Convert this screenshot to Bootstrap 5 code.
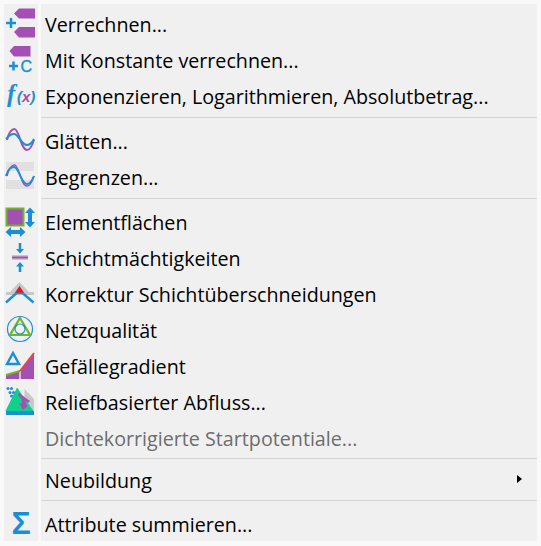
<!DOCTYPE html>
<html lang="de">
<head>
    <meta charset="UTF-8">
    <meta name="viewport" content="width=device-width, initial-scale=1.0">
    <title>Kontextmenü</title>
    <link rel="stylesheet" href="https://cdn.jsdelivr.net/npm/bootstrap@5.3.0/dist/css/bootstrap.min.css">
    <style>
        html, body { background: #f9f9f9; }
        body { font-family: "Open Sans", "Noto Sans", sans-serif; font-size: 19.7px; color: #000; height: 546px; overflow: hidden; }
        .menu-panel { margin: 4px 4px 0 4px; padding-top: 3px; background: linear-gradient(#f0f0f0, #f0f0f0) no-repeat 0 0 / 34px 100%, linear-gradient(#f0f0f0, #f0f0f0) no-repeat 37px 0 / calc(100% - 37px) 100%; height: 537px; }
        .menu-row { height: 36px; }
        .menu-row.short { height: 30px; }
        .menu-ico { width: 34px; height: 36px; flex: none; }
        .menu-label { margin-left: 7px; white-space: nowrap; line-height: 36px; }
        .short .menu-label { line-height: 30px; margin-left: 41px; }
        .off { color: #6d6d6d; }
        .menu-sep { height: 9px; margin-left: 37px; padding-top: 2px; }
        .menu-sep.up { padding-top: 1px; }
        .menu-sep.down { padding-top: 4px; }
        .menu-sep div { height: 1px; background: #d4d4d4; }
        .sub-arrow { width: 0; height: 0; border-left: 5px solid #000; border-top: 4.5px solid transparent; border-bottom: 4.5px solid transparent; margin-right: 15px; margin-bottom: 5px; }
        .sigma-ico { color: #1b8fd6; font-family: "Liberation Sans", sans-serif; font-size: 32px; font-weight: 700; line-height: 36px; }
        .last-row .menu-label { padding-top: 3px; }
    </style>
</head>
<body>
    <div class="menu-panel">
        <div class="menu-row d-flex align-items-center">
            <svg class="menu-ico" viewBox="0 0 34 36"><path d="M10 6.500 15 1.500h16v10H15zM10 25 15 20h16v10.500H15z" fill="#a44fb4"/><path d="M7 11v10M2 16h10" stroke="#1b8fd6" stroke-width="2.500" fill="none"/></svg>
            <span class="menu-label">Verrechnen...</span>
        </div>
        <div class="menu-row d-flex align-items-center">
            <svg class="menu-ico" viewBox="0 0 34 36"><path d="M5.500 8 10 3h16.500v10.500H10z" fill="#a44fb4"/><path d="M5 23h9M9.500 18.500v9" stroke="#1b8fd6" stroke-width="2.500" fill="none"/><text x="16.500" y="29" font-family="Liberation Sans" font-size="16" fill="#1b8fd6" stroke="#1b8fd6" stroke-width=".4">C</text></svg>
            <span class="menu-label">Mit Konstante verrechnen...</span>
        </div>
        <div class="menu-row d-flex align-items-center">
            <svg class="menu-ico" viewBox="0 0 34 36"><text x="3" y="23" font-family="Liberation Serif" font-size="25" font-style="italic" font-weight="700" fill="#1b8fd6">f</text><text x="13" y="23" font-family="Liberation Sans" font-size="15" font-style="italic" font-weight="700" fill="#1b8fd6">(<tspan fill="#a44fb4">x</tspan>)</text></svg>
            <span class="menu-label">Exponenzieren, Logarithmieren, Absolutbetrag...</span>
        </div>
        <div class="menu-sep"><div></div></div>
        <div class="menu-row d-flex align-items-center">
            <svg class="menu-ico" viewBox="0 0 34 36"><path d="M3 16C5 8 8 5 10.500 5 15 5 17 26 23 26 26 26 28 22 30 16" stroke="#a44fb4" stroke-width="2" fill="none"/><path d="M2 15C5 11 7 10 10 10 15 10 17 21 23 21 26 21 28 19 30 15" stroke="#1b8fd6" stroke-width="2" fill="none"/></svg>
            <span class="menu-label">Glätten...</span>
        </div>
        <div class="menu-row d-flex align-items-center">
            <svg class="menu-ico" viewBox="0 0 34 36"><path d="M2 2h28v9H2zM2 20h28v9H2z" fill="#e0e0e0"/><path d="M3 16C5 8 8 5 10.500 5 15 5 17 26 23 26 26 26 28 22 30 16" stroke="#a44fb4" stroke-width="1.500" fill="none"/><path d="M2 16C4 9 7 7 10 7 15 7 17 24 23 24 26 24 28 21 30 16" stroke="#1b8fd6" stroke-width="2" fill="none"/></svg>
            <span class="menu-label">Begrenzen...</span>
        </div>
        <div class="menu-sep"><div></div></div>
        <div class="menu-row d-flex align-items-center">
            <svg class="menu-ico" viewBox="0 0 34 36"><rect x="2.500" y="3.500" width="17" height="17" fill="#a44fb4" stroke="#6eb52a" stroke-width="2"/><path d="M26 2.500 21 8h3v9h-3L26 22.500 31 17h-3V8h3zM1.500 27 7 22v3h9v-3L21.500 27 16 32v-3H7v3z" fill="#1b8fd6"/></svg>
            <span class="menu-label">Elementflächen</span>
        </div>
        <div class="menu-row d-flex align-items-center">
            <svg class="menu-ico" viewBox="0 0 34 36"><path d="M8 14h16v5H8z" fill="#c8c8c8"/><path d="M8 15.500h16v2H8z" fill="#a44fb4"/><path d="M16 2v6" stroke="#1b8fd6" stroke-width="2.500"/><path d="M12 8h8l-4 4.500zM12 25.500h8L16 21z" fill="#1b8fd6"/><path d="M16 25v6" stroke="#1b8fd6" stroke-width="2.500"/></svg>
            <span class="menu-label">Schichtmächtigkeiten</span>
        </div>
        <div class="menu-row d-flex align-items-center">
            <svg class="menu-ico" viewBox="0 0 34 36"><path d="M15.500 5 26 16H5z" fill="#c8c8c8"/><path d="M2 15h28v3H2z" fill="#c8c8c8"/><path d="M2 25.500 12.500 16h6L29.500 25.500" stroke="#1b8fd6" stroke-width="2.400" fill="none"/><path d="M15.500 9 20 15.500H11z" fill="#e8141c"/></svg>
            <span class="menu-label">Korrektur Schichtüberschneidungen</span>
        </div>
        <div class="menu-row d-flex align-items-center">
            <svg class="menu-ico" viewBox="0 0 34 36"><circle cx="16" cy="16" r="12.500" stroke="#1b8fd6" stroke-width="1.200" fill="none"/><path d="M16 5 26 22H6z" stroke="#6eb52a" stroke-width="2.200" fill="none"/><circle cx="16" cy="16" r="5" stroke="#1b8fd6" stroke-width="1.200" fill="none"/></svg>
            <span class="menu-label">Netzqualität</span>
        </div>
        <div class="menu-row d-flex align-items-center">
            <svg class="menu-ico" viewBox="0 0 34 36"><path d="M2 26 16 22 30 4V30H2z" fill="#a44fb4"/><path d="M15 22v8h2v-8z" fill="#c8c8c8"/><path d="M2 26 16 22" stroke="#6eb52a" stroke-width="2" fill="none"/><path d="M16 22 30 4" stroke="#f0453c" stroke-width="2" fill="none"/><path d="M9 4 15 15H3z" stroke="#1b8fd6" stroke-width="2.400" fill="none"/></svg>
            <span class="menu-label">Gefällegradient</span>
        </div>
        <div class="menu-row d-flex align-items-center">
            <svg class="menu-ico" viewBox="0 0 34 36"><path d="M20.500 4 30 14V26H20.500z" fill="#c8c8c8"/><path d="M13 2.500 29.500 26H1.500z" fill="#0fd18c"/><path d="M2 26h28v4H2z" fill="#1b8fd6"/><path d="M15 8 26 16 24 18 21 15.500 23 21 25 20 19 25 15 18 18 19 17.500 14 14 10z" fill="#a44fb4"/><g fill="#1b8fd6"><circle cx="4" cy="3.500" r="1.500"/><circle cx="7.500" cy="3.500" r="1.500"/><circle cx="6" cy="7.500" r="1.500"/><circle cx="9.500" cy="7.500" r="1.500"/><circle cx="7.500" cy="11" r="1.500"/></g></svg>
            <span class="menu-label">Reliefbasierter Abfluss...</span>
        </div>
        <div class="menu-row d-flex align-items-center">
            <span class="menu-ico"></span>
            <span class="menu-label off">Dichtekorrigierte Startpotentiale...</span>
        </div>
        <div class="menu-sep up"><div></div></div>
        <div class="menu-row short d-flex align-items-center">
            <span class="menu-label flex-grow-1">Neubildung</span>
            <span class="sub-arrow"></span>
        </div>
        <div class="menu-sep down"><div></div></div>
        <div class="menu-row last-row d-flex align-items-center">
            <span class="menu-ico d-flex align-items-center justify-content-center sigma-ico">Σ</span>
            <span class="menu-label">Attribute summieren...</span>
        </div>
    </div>
</body>
</html>
